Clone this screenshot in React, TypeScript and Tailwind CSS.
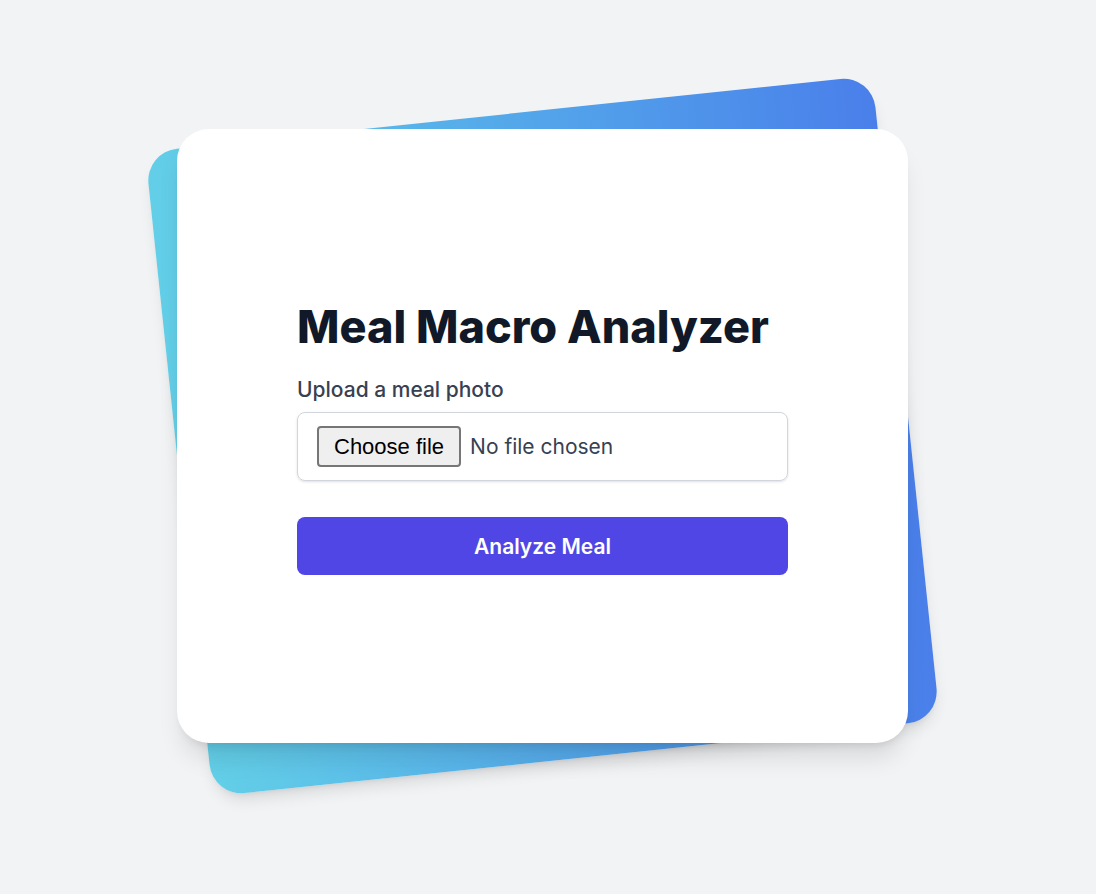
const App = () => {
  return (
    <div className="min-h-screen bg-[#f2f3f5] flex items-center justify-center pr-[11px] pb-[22px] font-['Inter',sans-serif]">
      <div className="relative w-[731px] h-[614px]">
        {/* gradient card behind */}
        <div className="absolute inset-x-0 -inset-y-[17px] rounded-[2rem] bg-gradient-to-r from-[#63cfe7] to-[#4a7fea] shadow-lg -rotate-6" />

        {/* main card */}
        <div className="relative h-full rounded-[2rem] bg-white shadow-xl px-[120px] pt-[4px] flex flex-col justify-center">
          <h1 className="text-[45px] leading-[1.15] font-extrabold text-[#111827] mb-6">
            Meal Macro Analyzer
          </h1>
          <label htmlFor="meal-photo" className="block text-[21px] leading-7 font-medium text-[#374151] mb-2">
            Upload a meal photo
          </label>
          <label
            htmlFor="meal-photo"
            className="h-[69px] flex items-center gap-[9px] border border-gray-300 rounded-lg shadow-sm px-[19px] cursor-pointer"
          >
            <input id="meal-photo" type="file" accept="image/*" className="hidden" />
            <span className="h-[41px] px-[15px] flex items-center bg-[#efefef] border-2 border-[#767676] rounded text-black font-['Liberation_Sans',sans-serif] text-[22px]">
              Choose file
            </span>
            <span className="text-[21px] text-[#374151]">No file chosen</span>
          </label>
          <button className="mt-9 h-[58px] w-full rounded-lg bg-[#4f46e5] text-white text-[21px] font-semibold">
            Analyze Meal
          </button>
        </div>
      </div>
    </div>
  );
};

export default App;
